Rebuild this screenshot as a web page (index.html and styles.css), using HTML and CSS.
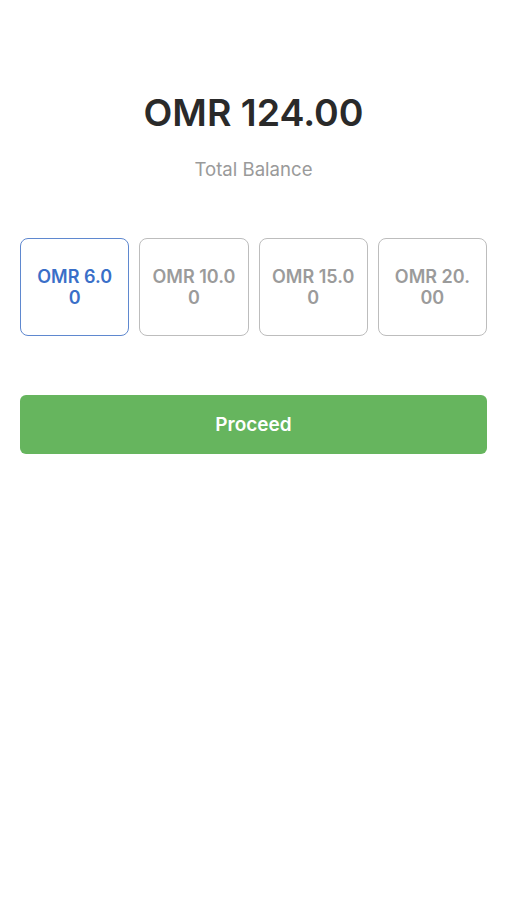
FILE: index.html
```html
<!DOCTYPE html>
<html lang="en">
<head>
    <meta charset="UTF-8">
    <meta name="viewport" content="width=device-width, initial-scale=1.0">
    <title>Top Up</title>
    <link rel="stylesheet" href="styles.css">
</head>
<body>
<div class="balance">
    <h1 class="balance-amount">OMR 124.00</h1>
    <p class="balance-label">Total Balance</p>
</div>
<div class="amounts">
    <button class="amount selected">OMR 6.00</button>
    <button class="amount">OMR 10.00</button>
    <button class="amount">OMR 15.00</button>
    <button class="amount">OMR 20.00</button>
</div>
<button class="proceed">Proceed</button>
</body>
</html>
```

FILE: styles.css
```css
body {
    font-family: Inter, 'Liberation Sans', sans-serif;
    background-color: #fff;
    color: #2b2b2b;
    margin: 0;
    padding: 90px 20px 0;
}
.balance {
    text-align: center;
}
.balance-amount {
    margin: 0;
    font-size: 37.5px;
    line-height: 46px;
    font-weight: 600;
    color: #2a2a2a;
}
.balance-label {
    margin: 21px 0 0;
    font-size: 18.6px;
    line-height: 24px;
    color: #9a9a9a;
}
.amounts {
    display: grid;
    grid-template-columns: repeat(4, 1fr);
    gap: 10px;
    margin-top: 57px;
}
.amount {
    height: 98px;
    padding: 0 11px;
    border: 1.5px solid #bdbdbd;
    border-radius: 8px;
    background-color: #fff;
    color: #9b9b9b;
    font-family: inherit;
    font-size: 18px;
    font-weight: 600;
    line-height: 21px;
    word-break: break-all;
    cursor: pointer;
}
.amount.selected {
    border-color: #5f88cf;
    color: #3a6fc8;
}
.proceed {
    display: block;
    width: 100%;
    height: 59px;
    margin-top: 59px;
    border: none;
    border-radius: 6px;
    background-color: #66b55e;
    color: #fff;
    font-family: inherit;
    font-size: 19px;
    font-weight: 600;
    cursor: pointer;
}
```
